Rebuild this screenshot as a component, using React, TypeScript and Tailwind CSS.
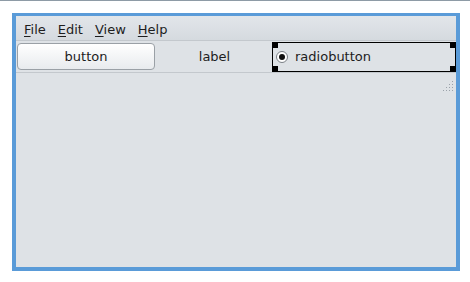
const menus = [
  { key: "F", rest: "ile" },
  { key: "E", rest: "dit" },
  { key: "V", rest: "iew" },
  { key: "H", rest: "elp" },
];

function Handle({ pos }: { pos: string }) {
  return <span className={`absolute h-[6px] w-[6px] bg-black ${pos}`}></span>;
}

export default function App() {
  return (
    <div
      className="h-[282px] w-[470px] bg-white text-[13px] text-[#1d1d1d]"
      style={{ fontFamily: '"DejaVu Sans", sans-serif' }}
    >
      <div className="h-px w-full bg-[#8e9ba6]"></div>
      <div className="ml-[12px] mt-[12px] flex h-[258px] w-[448px] flex-col border-4 border-t-[3px] border-[#5a9bd8] bg-[#dee2e6]">
        {/* menubar */}
        <div className="flex h-[25px] items-center gap-[12px] border-b border-[#c3c8cd] bg-gradient-to-b from-[#e2e6ea] to-[#d5dadf] pl-[8px] pt-[3px]">
          {menus.map((m) => (
            <span key={m.key} className="leading-none">
              <span className="underline underline-offset-2">{m.key}</span>
              {m.rest}
            </span>
          ))}
        </div>

        {/* toolbar */}
        <div className="flex h-[32px] items-center border-b border-[#c3c8cd]">
          <button className="ml-px h-[27px] w-[138px] rounded-[4px] border border-[#9aa0a6] bg-gradient-to-b from-white to-[#e8ebee]">
            button
          </button>
          <div className="flex-1 pl-[2px] text-center">label</div>
          <div className="relative flex h-[30px] w-[184px] items-center border border-black pl-[3px]">
            <Handle pos="-left-px -top-px" />
            <Handle pos="-right-px -top-px" />
            <Handle pos="-left-px -bottom-px" />
            <Handle pos="-right-px -bottom-px" />
            <span className="flex h-[12px] w-[12px] items-center justify-center rounded-full border border-[#7a7f85] bg-white">
              <span className="h-[6px] w-[6px] rounded-full bg-[#111]"></span>
            </span>
            <span className="ml-[7px]">radiobutton</span>
          </div>
        </div>

        {/* size grip */}
        <div className="flex justify-end pr-[2px] pt-[8px]">
          <svg width="11" height="11" viewBox="0 0 11 11">
            {[
              [9, 0], [9, 3], [6, 3], [9, 6], [6, 6], [3, 6], [9, 9], [6, 9], [3, 9], [0, 9],
            ].map(([x, y], i) => (
              <rect key={i} x={x} y={y} width="1" height="1" fill="#9aa2aa" />
            ))}
          </svg>
        </div>
      </div>
    </div>
  );
}
